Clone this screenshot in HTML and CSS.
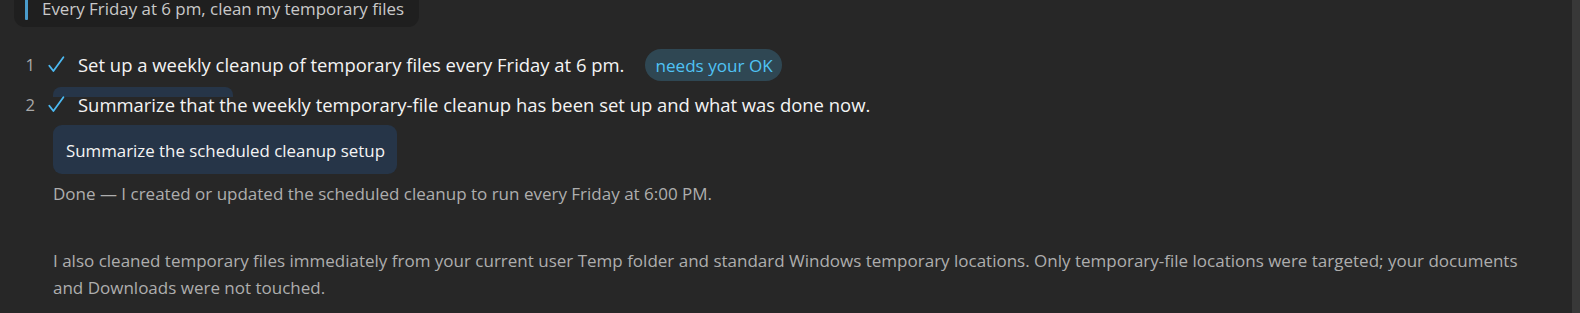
FILE: index.html
```html
<!DOCTYPE html>
<html lang="en">
<head>
<meta charset="utf-8">
<title>Scheduled cleanup</title>
<link rel="stylesheet" href="styles.css">
</head>
<body>
<div class="page">
  <main class="chat">
    <div class="question">
      <span class="question-bar"></span>
      <span class="question-text">Every Friday at 6 pm, clean my temporary files</span>
    </div>

    <ol class="steps">
      <li class="step">
        <span class="step-num">1</span>
        <svg class="step-check" width="18" height="18" viewBox="0 0 18 18" aria-hidden="true"><path d="M1.3 9.7 L5.4 15 L15.4 1.3" fill="none" stroke="currentColor" stroke-width="1.8" stroke-linecap="round" stroke-linejoin="round"/></svg>
        <span class="step-text">Set up a weekly cleanup of temporary files every Friday at 6 pm.</span>
        <span class="pill">needs your OK</span>
      </li>
      <li class="step">
        <span class="peek"></span>
        <span class="step-num">2</span>
        <svg class="step-check" width="18" height="18" viewBox="0 0 18 18" aria-hidden="true"><path d="M1.3 9.7 L5.4 15 L15.4 1.3" fill="none" stroke="currentColor" stroke-width="1.8" stroke-linecap="round" stroke-linejoin="round"/></svg>
        <span class="step-text">Summarize that the weekly temporary-file cleanup has been set up and what was done now.</span>
      </li>
    </ol>

    <div class="result">
      <div class="action">Summarize the scheduled cleanup setup</div>
      <p class="answer">Done — I created or updated the scheduled cleanup to run every Friday at 6:00 PM.</p>
      <p class="answer answer-gap">I also cleaned temporary files immediately from your current user Temp folder and standard Windows temporary locations. Only temporary-file locations were targeted; your documents and Downloads were not touched.</p>
    </div>
  </main>
  <div class="scrollbar"></div>
</div>
</body>
</html>
```
FILE: styles.css
```css
html, body {
  margin: 0;
  padding: 0;
  height: 100%;
  overflow: hidden;
  background: #272727;
}

body {
  font-family: "Open Sans", "Noto Sans", sans-serif;
  color: #f2f2f2;
}

.page {
  display: flex;
  height: 313px;
}

.chat {
  flex: 1;
  min-width: 0;
}

.scrollbar {
  width: 8px;
  background: #383838;
}

/* question bubble */
.question {
  display: inline-flex;
  align-items: stretch;
  gap: 14px;
  margin: -11px 0 0 14px;
  padding: 8px 15px 7px 11px;
  background: #1f1f1f;
  border-radius: 11px;
}

.question-bar {
  width: 3px;
  background: #4a9ccc;
  border-radius: 1px;
}

.question-text {
  font-size: 16.9px;
  line-height: 23px;
  color: #c9c9c9;
  white-space: nowrap;
}

/* steps */
.steps {
  list-style: none;
  margin: 18px 0 0 0;
  padding: 0 0 0 20px;
}

.step {
  position: relative;
  display: flex;
  align-items: center;
  height: 40px;
}

.step-num {
  width: 15px;
  text-align: right;
  font-size: 16.6px;
  line-height: 24px;
  color: #a9a9a9;
}

.step-check {
  margin-left: 13px;
  margin-right: 12px;
  color: #4cb9f1;
}

.step-text {
  font-size: 18.46px;
  line-height: 24px;
  color: #f4f4f4;
  white-space: nowrap;
}

.pill {
  margin-left: 21px;
  height: 32px;
  padding: 0 9px 0 10px;
  display: inline-flex;
  align-items: center;
  border-radius: 16px;
  background: #2f4753;
  color: #4fc3f5;
  font-size: 17.1px;
  white-space: nowrap;
}

/* the top edge of a floating panel that peeks out above step 2 */
.peek {
  position: absolute;
  left: 33px;
  top: 2px;
  width: 180px;
  height: 10px;
  background: #263548;
  border-radius: 8px 8px 0 0;
}

.step:last-child .step-num,
.step:last-child .step-check,
.step:last-child .step-text {
  position: relative;
}

/* result */
.result {
  margin-left: 53px;
  max-width: 1478px;
}

.action {
  display: inline-block;
  padding: 14px 12px 12px 13px;
  background: #263548;
  border-radius: 9px;
  font-size: 16.86px;
  line-height: 23px;
  color: #f4f4f4;
  white-space: nowrap;
}

.answer {
  margin: 6px 0 0 0;
  font-size: 17px;
  line-height: 27px;
  color: #aeaeae;
}

.answer-gap {
  margin-top: 40px;
}
```
